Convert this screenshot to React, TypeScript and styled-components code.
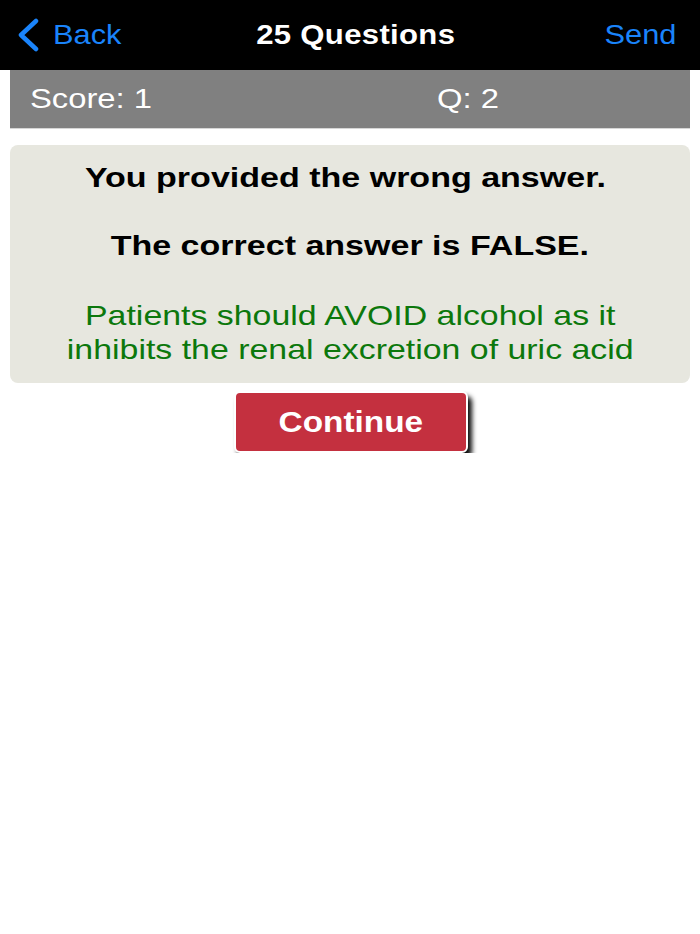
import styled, { createGlobalStyle } from "styled-components";

const GlobalStyle = createGlobalStyle`
  html, body {
    margin: 0;
    padding: 0;
    background: #ffffff;
    font-family: "Liberation Sans", Arial, sans-serif;
  }
`;

// the reference screenshot is stretched sideways, so text is widened with scaleX
const Stretch = styled.span<{ $sx: number; $origin?: string }>`
  display: inline-block;
  transform: scaleX(${(p) => p.$sx});
  transform-origin: ${(p) => p.$origin ?? "center"};
`;

const NavBar = styled.header`
  height: 70px;
  background: #000;
  display: flex;
  align-items: center;
  justify-content: space-between;
  padding: 0 24px 0 16px;
  box-sizing: border-box;
`;

const NavLink = styled.button`
  background: none;
  border: none;
  padding: 0;
  display: flex;
  align-items: center;
  gap: 13px;
  color: #1a84fb;
  font-family: "Liberation Sans", Arial, sans-serif;
  font-size: 28px;
  cursor: pointer;
`;

const Title = styled.h1`
  margin: 0;
  color: #fff;
  font-size: 28px;
  font-weight: 700;
  letter-spacing: 0.3px;
  transform: translateX(-7px);
`;

const ScoreBar = styled.div`
  margin: 0 10px;
  height: 59px;
  background: #808080;
  border-bottom: 1px solid #d6d6d6;
  display: grid;
  grid-template-columns: 407px 1fr;
  align-items: center;
  padding-left: 20px;
  color: #fff;
  font-size: 28px;
  box-sizing: border-box;
`;

const Card = styled.section`
  margin: 16px 10px 0;
  background: #e7e7df;
  border-radius: 8px;
  padding: 16px 0 16px;
  display: flex;
  flex-direction: column;
  align-items: center;
  text-align: center;
`;

const Heading = styled.p<{ $gap?: number; $shift?: number }>`
  margin: 0 0 ${(p) => p.$gap ?? 0}px;
  font-size: 28px;
  font-weight: 700;
  line-height: 34px;
  color: #000;
  transform: translateX(${(p) => p.$shift ?? 0}px) scaleX(1.215);
`;

const Explanation = styled.p`
  margin: 0;
  font-size: 28px;
  line-height: 34px;
  color: #0c780c;
  transform: scaleX(1.21);
`;

const ButtonRow = styled.div`
  display: flex;
  justify-content: center;
  padding-top: 8px;
`;

const ContinueButton = styled.button`
  width: 234px;
  height: 62px;
  background: #c4303f;
  color: #fff;
  border: 2px solid #fff;
  border-radius: 6px;
  box-shadow: 4px 5px 5px rgba(0, 0, 0, 0.95);
  font-family: "Liberation Sans", Arial, sans-serif;
  font-size: 29px;
  font-weight: 700;
  cursor: pointer;
  transform: translateX(1px);
`;

const Chevron = () => (
  <svg width="24" height="34" viewBox="0 0 24 34">
    <path
      d="M20 3 L5 17 L20 31"
      fill="none"
      stroke="#1a84fb"
      strokeWidth="4.5"
      strokeLinecap="round"
      strokeLinejoin="round"
    />
  </svg>
);

const App = (): JSX.Element => {
  return (
    <>
      <GlobalStyle />
      <NavBar>
        <NavLink>
          <Chevron />
          <Stretch $sx={1.1} $origin="left">Back</Stretch>
        </NavLink>
        <Title>
          <Stretch $sx={1.11}>25 Questions</Stretch>
        </Title>
        <NavLink>
          <Stretch $sx={1.1} $origin="right">Send</Stretch>
        </NavLink>
      </NavBar>
      <ScoreBar>
        <span>
          <Stretch $sx={1.17} $origin="left">Score: 1</Stretch>
        </span>
        <span>
          <Stretch $sx={1.17} $origin="left">Q: 2</Stretch>
        </span>
      </ScoreBar>
      <Card>
        <Heading $gap={34} $shift={-5}>
          You provided the wrong answer.
        </Heading>
        <Heading $gap={36}>The correct answer is FALSE.</Heading>
        <Explanation>
          Patients should AVOID alcohol as it
          <br />
          inhibits the renal excretion of uric acid
        </Explanation>
      </Card>
      <ButtonRow>
        <ContinueButton>
          <Stretch $sx={1.15}>Continue</Stretch>
        </ContinueButton>
      </ButtonRow>
    </>
  );
};

export default App;
